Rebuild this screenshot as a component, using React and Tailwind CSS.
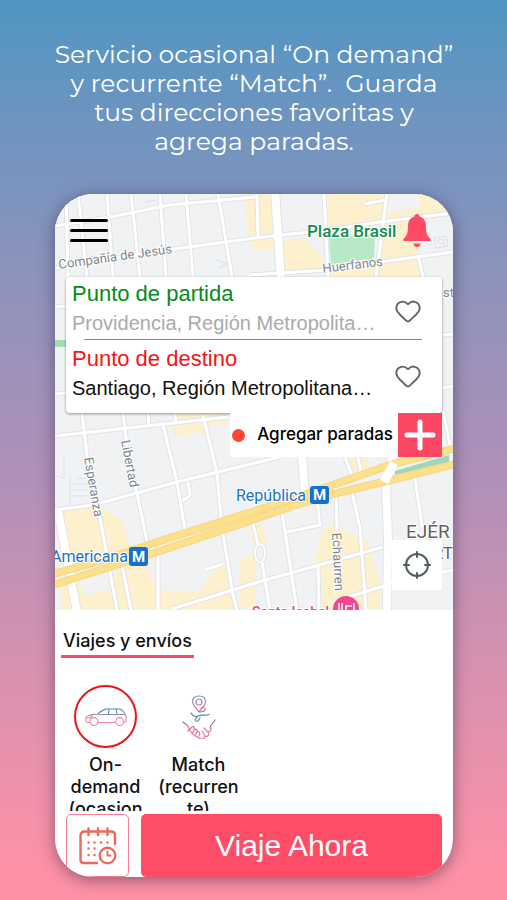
import React from 'react';
import { Heart } from 'lucide-react';

/**
 * City blocks, roads and labels behind the trip form
 */
const CityMap = () => {
  const roads = [
    'M55 226 L110 217 L170 205 L255 197',
    'M55 268 L167 250 L255 238 L327 230 L380 222 L453 213',
    'M250 275 L327 270 L380 262 L453 252',
    'M66 194 L68 277',
    'M78 194 L87 277',
    'M107 194 L113 277',
    'M131 194 L140 277',
    'M160 194 L166 277',
    'M186 194 L193 277',
    'M218 194 L232 277',
    'M257 194 L258 236',
    'M324 194 L328 277',
    'M387 194 L376 277',
    'M365 204 L385 200',
    'M418 255 L423 277',
    'M55 307 L66 306',
    'M55 394 L66 393',
    'M443 335 L453 334',
    'M443 388 L453 386',
    'M55 436 L228 417',
    'M55 510 L93 505 L137 493 L177 482 L255 463 L280 457',
    'M82 413 L87 455 L100 518 L117 610',
    'M123 413 L128 455 L137 493 L147 542 L158 555 L158 610',
    'M163 425 L177 482 L185 530',
    'M203 415 L217 473 L222 528 L233 595 L237 610',
    'M148 413 L149 427',
    'M175 413 L176 423',
    'M122 565 L131 610',
    'M172 609 L233 590 L255 583 L383 547',
    'M205 570 L223 564',
    'M188 482 L190 494 Q190 498 182 500',
    'M287 532 L320 525 L317 498',
    'M282 512 L297 610',
    'M252 520 L258 545',
    'M262 562 L270 610',
    'M336 488 L337 530',
    'M352 492 L360 528 L366 610',
    'M345 457 L353 478',
    'M358 457 L361 474',
    'M415 478 L422 527',
    'M333 602 L393 583',
    'M318 567 L319 610',
    'M443 410 L450 445',
    'M443 572 L453 570',
    'M55 520 L60 518',
  ];
  const wideRoads = [
    'M275 190 L281 280',
    'M302 455 L305 494',
    'M393 455 L386 482 L388 540 L387 612',
    'M58 510 L70 575 L77 612',
  ];
  const avenues = [
    'M50 575 L110 558 L157 542 L220 522 L255 511 L327 487 L390 465 L456 448',
    'M50 586 L160 551 L255 519 L293 506 L333 494 L383 482 L456 464',
  ];

  return (
    <svg
      className="absolute inset-0 h-full w-full"
      viewBox="55 194 398 416"
      preserveAspectRatio="xMidYMid slice"
      fill="none"
      role="img"
      aria-label="Mapa"
    >
      <rect x="0" y="0" width="600" height="900" fill="#f0f2f4" />

      {/* Commercial blocks */}
      <g fill="#fdf0cd">
        <path d="M244 194 H272 L278 248 L254 251 L248 236 Z" />
        <path d="M282 242 L304 238 L326 262 L326 270 L284 274 Z" />
        <path d="M328 194 H386 L380 221 L328 228 Z" />
        <path d="M390 212 L420 208 V194 H432 L453 206 V214 L420 222 V254 L378 260 L382 226 Z" />
        <path d="M330 271 L418 259 L422 278 H330 Z" />
        <path d="M172 427 L205 422 L208 432 L174 436 Z" />
        <path d="M172 415 L190 413 L228 414 V426 L176 422 Z" />
        <path d="M60 511 L98 506 L122 520 L128 540 L132 545 L108 557 L66 568 Z" />
        <path d="M62 585 L80 582 L84 596 L110 590 L118 568 L146 562 L156 590 L200 592 L216 568 L226 566 L236 610 H60 Z" />
        <path d="M240 562 L256 550 L256 606 L240 608 Z" />
        <path d="M247 530 L262 524 L268 545 L255 545 Z" />
        <path d="M322 532 L336 520 L342 530 L368 540 L370 552 L382 585 L380 610 H320 L316 558 Z" />
        <path d="M348 457 L368 457 L370 470 L352 474 Z" />
      </g>
      <path d="M76 478 H90 M70 484 H90 M70 490 H92 M70 496 H92 M70 478 V506 M64 454 V478 L56 476" stroke="#e0e3e6" strokeWidth="1" />
      <path d="M329 239 L375 234 L374 258 L331 265 Z" fill="#b8e9c6" />
      <path d="M55 340 H66 V347 H55 Z" fill="#a5dcb4" />

      {/* Streets */}
      <g stroke="#e1e4e7">
        {roads.map((d) => <path key={d} d={d} strokeWidth="5" />)}
        {wideRoads.map((d) => <path key={d} d={d} strokeWidth="10" />)}
      </g>
      <ellipse cx="260" cy="553" rx="5" ry="9" stroke="#e1e4e7" strokeWidth="4" />
      <ellipse cx="260" cy="553" rx="5" ry="9" stroke="#ffffff" strokeWidth="2" />
      <g stroke="#ffffff">
        {roads.map((d) => <path key={d} d={d} strokeWidth="3" />)}
        {wideRoads.map((d) => <path key={d} d={d} strokeWidth="8" />)}
      </g>

      {/* Main avenue */}
      <path d="M395 471 L449 455 V466 L395 479 Z" fill="#9fd8b8" />
      <g stroke="#f8d98a">
        {avenues.map((d) => <path key={d} d={d} strokeWidth="8" />)}
      </g>
      <g stroke="#fde08a">
        {avenues.map((d) => <path key={d} d={d} strokeWidth="5" />)}
      </g>
      <path d="M384 482 L394 463" stroke="#ffffff" strokeWidth="9" />

      {/* Building outlines */}
      <g stroke="#dde0e4" strokeWidth="1">
        <path d="M434 238 L446 236 L448 246 L436 248 Z M438 240 L443 239 L444 244 L439 244 Z" />
        <path d="M217 260 L228 264 L218 268" />
        <path d="M145 202 L157 200" />
      </g>

      {/* Street and place names */}
      <g fontFamily='Roboto, "Liberation Sans", sans-serif' fontSize="13" fill="#80858b" stroke="#ffffff" strokeWidth="2" paintOrder="stroke">
        <text transform="translate(59 269) rotate(-8)">Compañía de Jesús</text>
        <text transform="translate(323 273) rotate(-7)">Huerfanos</text>
        <text transform="translate(84 458) rotate(80)">Esperanza</text>
        <text transform="translate(121 441) rotate(79)">Libertad</text>
        <text transform="translate(332 533) rotate(87)">Echaurren</text>
        <text x="443" y="297">st</text>
        <text x="406" y="538" fontSize="19" fill="#5f6368">EJÉR</text>
        <text x="433" y="559" fontSize="17" fill="#5f6368">RT</text>
      </g>
      <g fontFamily='Roboto, "Liberation Sans", sans-serif' fontSize="17" fontWeight="500" stroke="#ffffff" strokeWidth="2" paintOrder="stroke">
        <text x="307" y="237" fill="#0d8c52">Plaza Brasil</text>
        <text x="236" y="501" fontSize="16" fontWeight="400" fill="#1a73c8">República</text>
        <text x="51" y="562" fontSize="16" fontWeight="400" fill="#1a73c8">Americana</text>
        <text x="252" y="617" fontSize="14" fill="#f0418a">Santa Isabel</text>
      </g>

      {/* Metro stations */}
      <g fontFamily='Roboto, "Liberation Sans", sans-serif' fontSize="15" fontWeight="700" textAnchor="middle">
        <rect x="310" y="486" width="19" height="18" rx="3" fill="#1270d4" />
        <text x="319.5" y="500" fill="#ffffff">M</text>
        <rect x="129" y="547" width="19" height="19" rx="3" fill="#1270d4" />
        <text x="138.5" y="562" fill="#ffffff">M</text>
      </g>
      <circle cx="346" cy="609" r="13" fill="#f5478f" />
      <path d="M339 603 V612 M342 603 V612 M346 612 V606 H352 M354 603 V612" stroke="#ffffff" strokeWidth="1.5" />
    </svg>
  );
};

const BellIcon = () => (
  <svg className="h-[34px] w-7" viewBox="0 0 28 34" fill="#ff4b66" aria-hidden="true">
    <path d="M14 0 C15.5 0 16.5 1 16.5 2.6 C21 3.8 23 7.5 23 12 C23 19 24 21.5 27.5 25 C28.2 26.2 27.6 27 26.5 27 H1.5 C0.4 27 -0.2 26.2 0.5 25 C4 21.5 5 19 5 12 C5 7.5 7 3.8 11.5 2.6 C11.5 1 12.5 0 14 0 Z" />
    <path d="M10.5 29.5 H17.5 C17.5 31.8 16 33 14 33 C12 33 10.5 31.8 10.5 29.5 Z" />
  </svg>
);

const LocateIcon = () => (
  <svg className="h-7 w-7" viewBox="0 0 28 28" fill="none" stroke="#50605f" strokeWidth="2" strokeLinecap="round" aria-hidden="true">
    <circle cx="14" cy="14" r="11" />
    <path d="M14 1 V6 M14 22 V27 M1 14 H6 M22 14 H27" />
  </svg>
);

const CarIcon = () => (
  <svg className="h-[18px] w-[42px]" viewBox="0 0 42 18" fill="none" stroke="url(#carTint)" strokeWidth="1.1" strokeLinejoin="round" strokeLinecap="round" aria-hidden="true">
    <defs>
      <linearGradient id="carTint" gradientUnits="userSpaceOnUse" x1="0" y1="0" x2="0" y2="18">
        <stop offset="0.2" stopColor="#5087b4" />
        <stop offset="0.6" stopColor="#f585a8" />
      </linearGradient>
    </defs>
    <path d="M5 14.5 H2 L1 13 V9.5 C2 7.5 8 6.3 12.5 6 C16 3.5 18 1.2 22 1 H34 C37 1 38.5 4 40 6 L41 8 V13.5 L39 14.5 M13 14.5 H30.5" />
    <path d="M14 6.5 H39 M24 1.5 L23.5 6 M31 1.5 L32 6 M1 10 H5 L7 8" />
    <circle cx="9" cy="13.5" r="3.9" fill="#ffffff" />
    <circle cx="34.5" cy="13.5" r="3.9" fill="#ffffff" />
  </svg>
);

const MatchIcon = () => (
  <svg className="h-11 w-[34px]" viewBox="0 0 34 44" fill="none" stroke="url(#matchTint)" strokeWidth="1.2" strokeLinejoin="round" strokeLinecap="round" aria-hidden="true">
    <defs>
      <linearGradient id="matchTint" gradientUnits="userSpaceOnUse" x1="0" y1="0" x2="0" y2="44">
        <stop offset="0" stopColor="#5a9cc6" />
        <stop offset="0.3" stopColor="#ee7ba4" />
        <stop offset="0.42" stopColor="#4d87b2" />
        <stop offset="0.6" stopColor="#6d7fa0" />
        <stop offset="0.8" stopColor="#f0709c" />
      </linearGradient>
    </defs>
    <path d="M17 17 C14 13 10.5 10 10.5 6.8 C10.5 3 13 1 17 1 C21 1 23.5 3 23.5 6.8 C23.5 10 20 13 17 17 Z" />
    <circle cx="17" cy="7" r="3" />
    <path d="M19 13.5 a2.2 2.2 0 1 1 2 3 L18 17" />
    <path d="M9 18 C11 21 14 22 16 21 C19 19 22 21 27 19.5 M16 21 L13 25 C15 28 17 25 18 23" />
    <path d="M1 27 L6 31 C7 36 11 40 17 43 C20 45 23 44 23 41 C26 42 28 40 26 37 C29 37 30 34 28 32 L33 25" />
    <path d="M6 36 L10 32 C12 31 13 33 12 35 L10 39 M12 35 C14 33 16 35 15 37 L13 41 M15 37 C17 36 19 38 17 41 M23 41 L20 36 M26 37 L22 33" />
  </svg>
);

const CalendarIcon = () => (
  <svg className="h-[38px] w-[38px]" viewBox="0 0 38 38" fill="none" stroke="#f0685c" strokeWidth="2.4" strokeLinecap="round" aria-hidden="true">
    <path d="M18 36 H5 Q1.5 36 1.5 32.5 V8.5 Q1.5 4.5 5.5 4.5 H32 Q36 4.5 36 8.5 V17" />
    <path d="M9.5 1.5 V8 M19 1.5 V8 M28.5 1.5 V8" />
    <path d="M9.5 15.5 h0.1 M15.5 15.5 h0.1 M22 15.5 h0.1 M28.5 15.5 h0.1 M9.5 21.5 h0.1 M15.5 21.5 h0.1 M9.5 28 h0.1 M15.5 28 h0.1" />
    <circle cx="28.5" cy="28.5" r="7.8" />
    <path d="M28.5 24.5 V28.5 H31.5" strokeWidth="1.8" />
  </svg>
);

/**
 * One address row of the trip form: title, text box and favourite button
 */
const AddressField = ({ id, title, titleClass, value, inputClass }) => (
  <div className="flex items-center">
    <div className="min-w-0 flex-1">
      <label htmlFor={id} className={`block text-[22px] leading-[33px] ${titleClass}`}>{title}</label>
      <input
        id={id}
        type="text"
        defaultValue={value}
        className={`block h-[26px] w-full bg-transparent text-[20px] outline-none ${inputClass}`}
      />
    </div>
    <button type="button" aria-label={`Guardar ${title} en favoritos`} className="mt-2 mr-2">
      <Heart className="size-7 text-[#666666]" strokeWidth={1.6} />
    </button>
  </div>
);

const ServiceOption = ({ label, active, children }) => (
  <button type="button" aria-pressed={active} className="flex w-[93px] flex-col items-center justify-start">
    <span className={`flex size-[63px] shrink-0 items-center justify-center rounded-full border-2 ${active ? 'border-[#ee1515]' : 'border-transparent'}`}>
      {children}
    </span>
    <span className="mt-1.5 w-[84px] text-center text-[18px] leading-[22px] font-medium break-words">{label}</span>
  </button>
);

export default function App() {
  return (
    <div className="flex min-h-screen flex-col items-center bg-linear-to-b from-[#4f95c2] via-[#ae90b8] via-52% to-[#ff91a6] to-97% pt-10 pr-[54px] pb-[23px] pl-[55px] font-['Liberation_Sans',sans-serif]">
      <h1 className="text-center font-['Montserrat','Inter',sans-serif] text-[25px] leading-[29px] font-normal whitespace-pre text-white">
        <span className="block">Servicio ocasional “On demand”</span>
        <span className="block">y recurrente “Match”.  Guarda</span>
        <span className="block">tus direcciones favoritas y</span>
        <span className="block">agrega paradas.</span>
      </h1>

      <main className="mt-[38px] w-full overflow-hidden rounded-[38px] bg-white shadow-[0_3px_16px_rgba(40,30,60,0.5)]">
        <section className="relative">
          <CityMap />
          <div className="relative flex flex-col px-[11px] pb-5">
            <header className="flex h-[83px] items-center justify-between pr-[11px] pb-2.5 pl-1">
              <button type="button" aria-label="Abrir menú" className="flex w-[38px] flex-col gap-[7px]">
                <span className="h-[3px] rounded-full bg-black" />
                <span className="h-[3px] rounded-full bg-black" />
                <span className="h-[3px] rounded-full bg-black" />
              </button>
              <button type="button" aria-label="Notificaciones">
                <BellIcon />
              </button>
            </header>

            <form className="rounded-sm bg-white pr-3 pb-3 pl-1.5 shadow-[0_1px_3px_rgba(0,0,0,0.4)]">
              <AddressField
                id="origin"
                title="Punto de partida"
                titleClass="text-[#078a1c]"
                value="Providencia, Región Metropolita…"
                inputClass="text-[#aaaaaa]"
              />
              <hr className="mt-[3px] mr-2 mb-[2px] ml-3 border-[#888888]" />
              <AddressField
                id="destination"
                title="Punto de destino"
                titleClass="text-[#f51414]"
                value="Santiago, Región Metropolitana…"
                inputClass="text-[#111111]"
              />
            </form>

            <div className="flex h-11 items-center self-end bg-white pl-[2px] font-['Inter',sans-serif]">
              <span className="mr-3 size-[13px] rounded-full bg-[#ff4535]" />
              <span id="add-stop" className="mr-[5px] text-[17px] font-medium">Agregar paradas</span>
              <button type="button" aria-labelledby="add-stop" className="flex size-11 items-center justify-center bg-[#fb4764]">
                <svg className="size-8" viewBox="0 0 32 32" stroke="#ffffff" strokeWidth="5" strokeLinecap="round" aria-hidden="true">
                  <path d="M16 3 V29 M3 16 H29" />
                </svg>
              </button>
            </div>

            <button type="button" aria-label="Mi ubicación" className="mt-[83px] flex size-[50px] items-center justify-center self-end bg-white">
              <LocateIcon />
            </button>
          </div>
        </section>

        <section className="px-1 pt-[19px] font-['Inter',sans-serif] text-[#111111]">
          <h2 className="ml-[2px] inline-block border-b-[3px] border-[#f54c68] px-[2px] pb-[2px] text-[18px] leading-6 font-medium">Viajes y envíos</h2>
          <div className="mt-[27px] flex h-[126px] items-start overflow-hidden">
            <ServiceOption label="On-demand (ocasional)" active>
              <CarIcon />
            </ServiceOption>
            <ServiceOption label="Match (recurrente)" active={false}>
              <MatchIcon />
            </ServiceOption>
          </div>
        </section>

        <footer className="mt-[3px] flex gap-3 px-[11px]">
          <button type="button" aria-label="Programar viaje" className="flex h-[63px] w-[63px] items-center justify-center rounded-[5px] border border-[#fb7f95] bg-white">
            <CalendarIcon />
          </button>
          <button type="button" className="h-[63px] flex-1 rounded-[5px] bg-[#ff4d68] text-[30px] text-white">Viaje Ahora</button>
        </footer>
      </main>
    </div>
  );
}
